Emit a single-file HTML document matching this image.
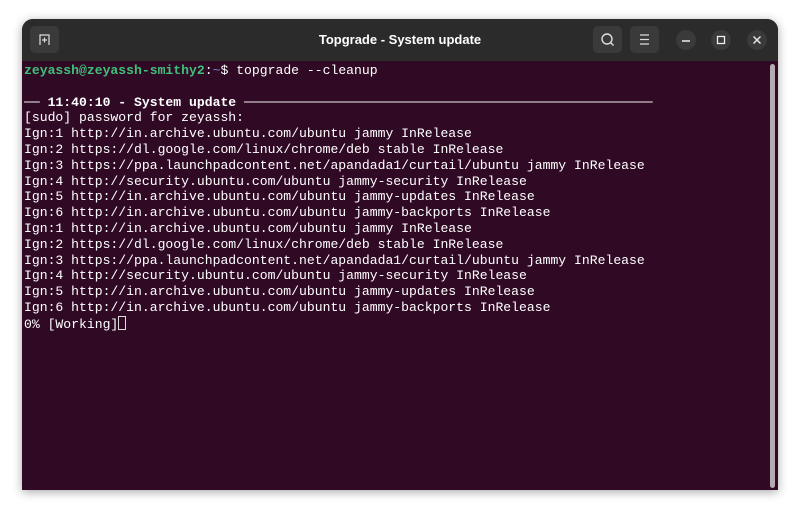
<!DOCTYPE html>
<html><head><style>
body{margin:0;width:800px;height:515px;background:#fff;overflow:hidden;font-family:"Liberation Sans",sans-serif}
.win{position:absolute;left:22px;top:19px;width:756px;height:471px;background:#300a24;border-radius:11px 11px 0 0;overflow:hidden;box-shadow:0 2px 10px rgba(0,0,0,.35)}
.tb{position:absolute;left:0;top:0;width:756px;height:42px;background:#2b2b2b}
.title{position:absolute;left:0;right:0;top:13px;text-align:center;color:#fff;font-weight:bold;font-size:13px}
.btn{position:absolute;top:7px;width:29px;height:27px;background:#3a3a3a;border-radius:5px}
.cb{position:absolute;top:11px;width:20px;height:20px;background:#3a3a3a;border-radius:50%}
pre{position:absolute;left:2px;top:44px;margin:0;font-family:"Liberation Mono",monospace;font-size:13.1px;line-height:15.8px;color:#fff}
.g{color:#3fc07a;font-weight:bold}.b{color:#6f8fd0}
.sb{position:absolute;left:748px;top:45px;width:5px;height:424px;background:#b5aab0;border-radius:3px}
.cur{display:inline-block;width:8px;height:14px;border:1px solid #ddd;box-sizing:border-box;vertical-align:-2px}
</style></head><body>
<div class="win">
<div class="tb">
<div class="btn" style="left:8px"><svg width="29" height="27"><path d="M10 19V9h9v10M12 14h5M14.5 11.5v5" stroke="#ddd" stroke-width="1.2" fill="none"/></svg></div>
<div class="title">Topgrade - System update</div>
<div class="btn" style="left:571px"><svg width="29" height="27"><circle cx="14" cy="13" r="5" stroke="#ddd" stroke-width="1.4" fill="none"/><path d="M17.5 16.5l3 3" stroke="#ddd" stroke-width="1.4"/></svg></div>
<div class="btn" style="left:608px"><svg width="29" height="27"><path d="M10 9h9M10 13.5h9M10 18h9" stroke="#ddd" stroke-width="1.2"/></svg></div>
<div class="cb" style="left:654px"><svg width="20" height="20"><path d="M6 11h8" stroke="#eee" stroke-width="1.4"/></svg></div>
<div class="cb" style="left:689px"><svg width="20" height="20"><rect x="6.5" y="6.5" width="7" height="7" stroke="#eee" stroke-width="1.3" fill="none"/></svg></div>
<div class="cb" style="left:725px"><svg width="20" height="20"><path d="M6.5 6.5l7 7M13.5 6.5l-7 7" stroke="#eee" stroke-width="1.4"/></svg></div>
</div>
<pre><span class="g">zeyassh@zeyassh-smithy2</span>:<span class="b">~</span>$ topgrade --cleanup

<b>── 11:40:10 - System update ────────────────────────────────────────────────────</b>
[sudo] password for zeyassh:
Ign:1 http://in.archive.ubuntu.com/ubuntu jammy InRelease
Ign:2 https://dl.google.com/linux/chrome/deb stable InRelease
Ign:3 https://ppa.launchpadcontent.net/apandada1/curtail/ubuntu jammy InRelease
Ign:4 http://security.ubuntu.com/ubuntu jammy-security InRelease
Ign:5 http://in.archive.ubuntu.com/ubuntu jammy-updates InRelease
Ign:6 http://in.archive.ubuntu.com/ubuntu jammy-backports InRelease
Ign:1 http://in.archive.ubuntu.com/ubuntu jammy InRelease
Ign:2 https://dl.google.com/linux/chrome/deb stable InRelease
Ign:3 https://ppa.launchpadcontent.net/apandada1/curtail/ubuntu jammy InRelease
Ign:4 http://security.ubuntu.com/ubuntu jammy-security InRelease
Ign:5 http://in.archive.ubuntu.com/ubuntu jammy-updates InRelease
Ign:6 http://in.archive.ubuntu.com/ubuntu jammy-backports InRelease
0% [Working]<span class="cur"></span></pre>
<div class="sb"></div>
</div>
</body></html>
